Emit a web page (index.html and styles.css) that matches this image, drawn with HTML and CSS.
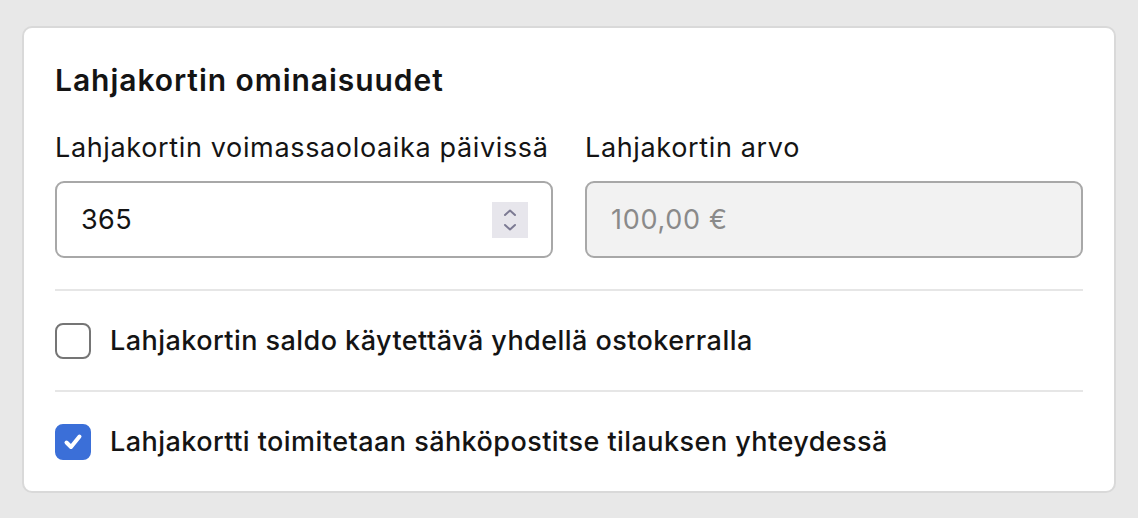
FILE: index.html
```html
<!DOCTYPE html>
<html lang="fi">
<head>
<meta charset="utf-8">
<title>Lahjakortin ominaisuudet</title>
<link rel="stylesheet" href="styles.css">
</head>
<body>
<section class="card">
  <h2 class="title">Lahjakortin ominaisuudet</h2>
  <div class="fields">
    <div class="field">
      <label class="label">Lahjakortin voimassaoloaika päivissä</label>
      <div class="input">
        <span class="value">365</span>
        <span class="spinner">
          <svg width="36" height="36" viewBox="0 0 36 36" fill="none" stroke="#7c7a93" stroke-width="2" stroke-linecap="round" stroke-linejoin="round">
            <path d="M13 13 L18 8.5 L23 13"/>
            <path d="M13 23 L18 27.5 L23 23"/>
          </svg>
        </span>
      </div>
    </div>
    <div class="field">
      <label class="label">Lahjakortin arvo</label>
      <div class="input disabled">
        <span class="value">100,00 €</span>
      </div>
    </div>
  </div>
  <hr class="divider">
  <div class="check-row">
    <span class="checkbox"></span>
    <span class="check-label">Lahjakortin saldo käytettävä yhdellä ostokerralla</span>
  </div>
  <hr class="divider">
  <div class="check-row">
    <span class="checkbox checked">
      <svg width="20" height="20" viewBox="0 0 20 20" fill="none" stroke="#fff" stroke-width="4" stroke-linecap="round" stroke-linejoin="round">
        <path d="M3.5 10.5 L8 15 L16.5 4.5"/>
      </svg>
    </span>
    <span class="check-label">Lahjakortti toimitetaan sähköpostitse tilauksen yhteydessä</span>
  </div>
</section>
</body>
</html>
```

FILE: styles.css
```css
* { box-sizing: border-box; }

html, body {
  margin: 0;
  padding: 0;
  background: #e8e8e8;
  font-family: Inter, "Noto Sans", "Liberation Sans", sans-serif;
  color: #141414;
}

body {
  padding: 26px 22px 25px 22px;
}

.card {
  background: #ffffff;
  border: 2px solid #d9d9d9;
  border-radius: 10px;
  padding: 34px 31px 31px 31px;
}

.title {
  margin: 0 0 34px 0;
  font-size: 30px;
  line-height: 36px;
  font-weight: 600;
  letter-spacing: 0.95px;
  color: #141414;
}

.fields {
  display: grid;
  grid-template-columns: 1fr 1fr;
  column-gap: 32px;
}

.field {
  display: flex;
  flex-direction: column;
}

.label {
  font-size: 27px;
  line-height: 32px;
  font-weight: 400;
  letter-spacing: 0.65px;
  margin-bottom: 17px;
  color: #141414;
  white-space: nowrap;
}

.input {
  height: 77px;
  border: 2px solid #a8a8a8;
  border-radius: 9px;
  background: #ffffff;
  display: flex;
  align-items: center;
  justify-content: space-between;
  padding: 0 23px 0 24px;
}

.input .value {
  font-size: 27px;
  letter-spacing: 0.4px;
  color: #141414;
}

.input.disabled {
  background: #f2f2f2;
}

.input.disabled .value {
  color: #8a8a8a;
  letter-spacing: 0.7px;
}

.spinner {
  width: 36px;
  height: 36px;
  background: #e7e6ec;
  display: flex;
}

.divider {
  border: 0;
  height: 2px;
  background: #e6e6e6;
  margin: 31px 0 0 0;
}

.check-row {
  display: flex;
  align-items: center;
  gap: 19px;
  margin-top: 32px;
  height: 36px;
}

.check-row + .divider {
  margin-top: 31px;
}

.checkbox {
  width: 36px;
  height: 36px;
  flex: 0 0 36px;
  border: 2px solid #757575;
  border-radius: 8px;
  background: #fff;
  display: flex;
  align-items: center;
  justify-content: center;
}

.checkbox.checked {
  background: #3b6fd8;
  border-color: #3b6fd8;
}

.check-label {
  font-size: 27px;
  font-weight: 500;
  line-height: 32px;
  letter-spacing: 0.45px;
  color: #141414;
}
```
